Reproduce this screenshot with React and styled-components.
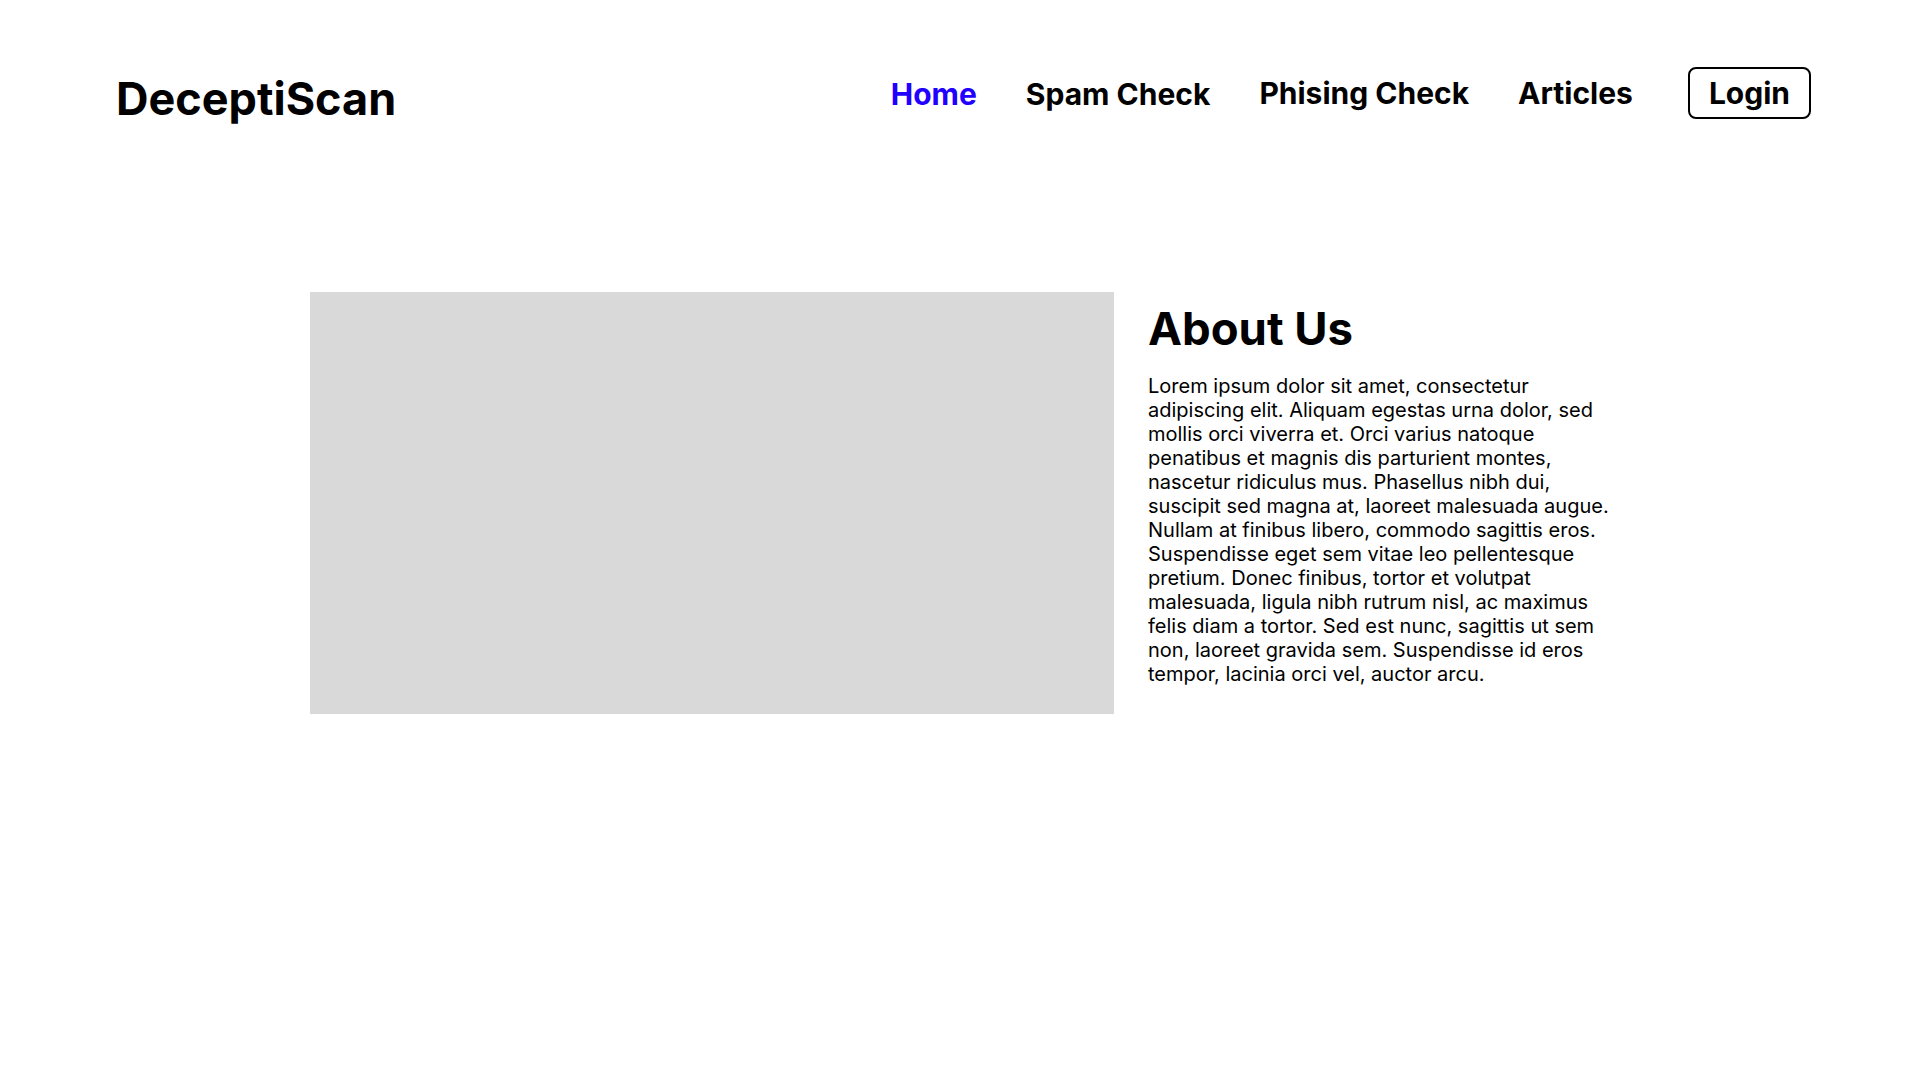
import React from "react";
import styled, { createGlobalStyle } from "styled-components";

const Global = createGlobalStyle`
  html, body { margin: 0; padding: 0; background: #ffffff; }
  body { font-family: Inter, "Noto Sans", "Liberation Sans", sans-serif; color: #000; }
`;

const Page = styled.div`
  width: 1920px;
  min-height: 1080px;
  background: #fff;
`;

const Header = styled.header`
  display: flex;
  align-items: center;
  justify-content: space-between;
  padding: 67px 109px 0 116px;
  height: 52px;
`;

const Logo = styled.div`
  font-size: 45px;
  font-weight: 700;
  line-height: 53px;
  margin-top: 10px;
`;

const Nav = styled.nav`
  display: flex;
  align-items: center;
  gap: 49px;
`;

const NavLink = styled.a`
  font-size: 30px;
  font-weight: 700;
  line-height: 36px;
  color: ${(p) => (p.$active ? "#2200ff" : "#000")};
  text-decoration: none;
  cursor: pointer;
  margin-top: ${(p) => p.$shift || 0}px;
`;

const LoginButton = styled.button`
  font-family: inherit;
  font-size: 30px;
  font-weight: 700;
  line-height: 36px;
  color: #000;
  background: #fff;
  border: 2px solid #000;
  border-radius: 8px;
  height: 52px;
  padding: 0 19px;
  margin-left: 6px;
  cursor: pointer;
`;

const Main = styled.main`
  display: flex;
  align-items: flex-start;
  gap: 34px;
  padding: 173px 0 0 310px;
`;

const ImageBox = styled.div`
  width: 804px;
  height: 422px;
  background: #d9d9d9;
  flex-shrink: 0;
`;

const TextColumn = styled.section`
  width: 472px;
  padding-top: 10px;
`;

const Heading = styled.h1`
  margin: 0 0 19px 0;
  font-size: 45.5px;
  font-weight: 700;
  line-height: 53px;
`;

const Paragraph = styled.p`
  margin: 0;
  font-size: 20px;
  font-weight: 400;
  line-height: 24px;
`;

const links = [
  { label: "Home", active: true, shift: 2 },
  { label: "Spam Check", shift: 2 },
  { label: "Phising Check", shift: 0 },
  { label: "Articles", shift: 0 },
];

export default function App() {
  return (
    <Page>
      <Global />
      <Header>
        <Logo>DeceptiScan</Logo>
        <Nav>
          {links.map((l) => (
            <NavLink key={l.label} $active={l.active} $shift={l.shift}>
              {l.label}
            </NavLink>
          ))}
          <LoginButton>Login</LoginButton>
        </Nav>
      </Header>
      <Main>
        <ImageBox />
        <TextColumn>
          <Heading>About Us</Heading>
          <Paragraph>
            Lorem ipsum dolor sit amet, consectetur adipiscing elit. Aliquam
            egestas urna dolor, sed mollis orci viverra et. Orci varius natoque
            penatibus et magnis dis parturient montes, nascetur ridiculus mus.
            Phasellus nibh dui, suscipit sed magna at, laoreet malesuada augue.
            Nullam at finibus libero, commodo sagittis eros. Suspendisse eget
            sem vitae leo pellentesque pretium. Donec finibus, tortor et
            volutpat malesuada, ligula nibh rutrum nisl, ac maximus felis diam a
            tortor. Sed est nunc, sagittis ut sem non, laoreet gravida sem.
            Suspendisse id eros tempor, lacinia orci vel, auctor arcu.
          </Paragraph>
        </TextColumn>
      </Main>
    </Page>
  );
}
